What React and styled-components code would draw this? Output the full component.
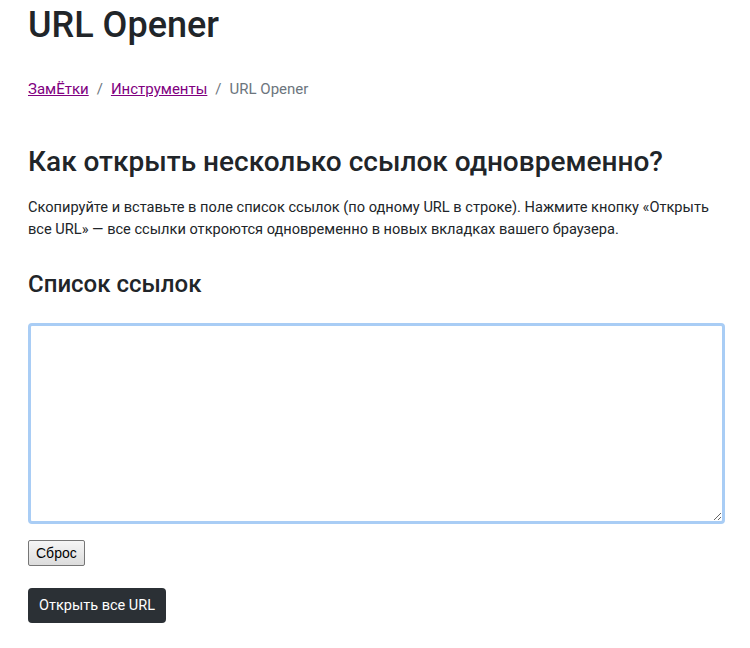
import React from "react";
import styled, { createGlobalStyle } from "styled-components";

const Global = createGlobalStyle`
  body { margin: 0; font-family: Roboto, "Noto Sans", sans-serif; color: #212529; background: #fff; }
`;
const Page = styled.div`padding: 0 26px 0 28px; display: flex; flex-direction: column;`;
const Title = styled.h1`font-size: 36px; font-weight: 500; margin: 4px 0 0; line-height: 43px;`;
const Crumbs = styled.nav`margin-top: 33px; font-size: 15px; color: #6c757d; display: flex; gap: 8px;`;
const Crumb = styled.a`color: #800080; text-decoration: underline;`;
const H2 = styled.h2`font-size: 28px; font-weight: 500; margin: 47px 0 0; line-height: 34px;`;
const P = styled.p`font-size: 14.6px; line-height: 22px; margin: 17px 0 0;`;
const H3 = styled.h3`font-size: 24px; font-weight: 500; margin: 30px 0 0; line-height: 29px;`;
const Area = styled.textarea`
  margin-top: 24px; height: 201px; box-sizing: border-box; width: 697px;
  border: 3px solid #a9cdf5; border-radius: 4px; outline: none; resize: vertical;
  padding: 6px 9px; font-size: 15px; font-family: Roboto, sans-serif;
`;
const Reset = styled.button`
  align-self: flex-start; margin-top: 16px; font: 14px "Liberation Sans", Arial, sans-serif;
  padding: 4px 7px; border: 1px solid #767676; border-radius: 2px;
  background: linear-gradient(#f6f6f6, #dcdcdc); color: #000;
`;
const Primary = styled.button`
  align-self: flex-start; margin-top: 22px; background: #2b3035; color: #fff; border: none;
  border-radius: 4px; padding: 0 11px; height: 35px; font: 14.5px Roboto, sans-serif;
`;

export default function App() {
  return (
    <>
      <Global />
      <Page>
        <Title>URL Opener</Title>
        <Crumbs>
          <Crumb href="#">ЗамЁтки</Crumb><span>/</span>
          <Crumb href="#">Инструменты</Crumb><span>/</span>
          <span>URL Opener</span>
        </Crumbs>
        <H2>Как открыть несколько ссылок одновременно?</H2>
        <P>Скопируйте и вставьте в поле список ссылок (по одному URL в строке). Нажмите кнопку «Открыть все URL» — все ссылки откроются одновременно в новых вкладках вашего браузера.</P>
        <H3>Список ссылок</H3>
        <Area autoFocus />
        <Reset>Сброс</Reset>
        <Primary>Открыть все URL</Primary>
      </Page>
    </>
  );
}
